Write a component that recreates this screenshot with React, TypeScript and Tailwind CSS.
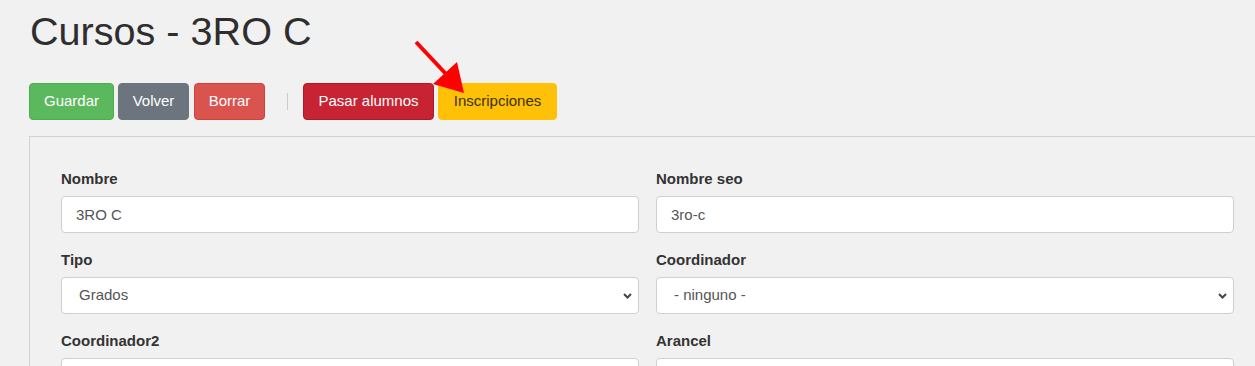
const Chevron = () => (
  <svg
    className="pointer-events-none absolute right-[7px] top-1/2 -translate-y-1/2"
    width="9"
    height="6"
    viewBox="0 0 9 6"
  >
    <path d="M1 1 L4.5 4.5 L8 1" fill="none" stroke="#444" strokeWidth="2" />
  </svg>
);

const Field = ({ label, value, select }: { label: string; value?: string; select?: boolean }) => (
  <div className="mb-[16px]">
    <label className="mb-[6px] block h-[22px] text-[15px] font-bold leading-[22px] text-[#333]">{label}</label>
    {select ? (
      <div className="relative">
        <select
          defaultValue={value}
          className="h-[37px] w-full appearance-none rounded-[4px] border border-[#cfcfcf] bg-white pl-[17px] text-[15px] text-[#555] outline-none"
        >
          <option>{value}</option>
        </select>
        <Chevron />
      </div>
    ) : (
      <input
        readOnly
        value={value ?? ""}
        className="block h-[37px] w-full rounded-[4px] border border-[#cfcfcf] bg-white pl-[14px] text-[15px] text-[#555] outline-none"
      />
    )}
  </div>
);

export default function App() {
  return (
    <div className="relative h-[366px] w-[1255px] overflow-hidden bg-[#f1f1f1] pl-[29px] font-['Liberation_Sans',Arial,sans-serif]">
      <h1 className="ml-[1px] pt-[9px] text-[39.6px] font-normal leading-[44px] text-[#2e2e2e]">Cursos - 3RO C</h1>

      <div className="mt-[30px] flex h-[37px] items-center text-[15px]">
        <button className="h-[37px] w-[85px] rounded-[4px] border border-[#4cae4c] bg-[#5cb85c] text-white">Guardar</button>
        <button className="ml-[4px] h-[37px] w-[71px] rounded-[4px] border border-[#6c757d] bg-[#6c757d] text-white">Volver</button>
        <button className="ml-[5px] h-[37px] w-[71px] rounded-[4px] border border-[#d43f3a] bg-[#d9534f] text-white">Borrar</button>
        <div className="ml-[22px] h-[17px] w-px bg-[#cccccc]" />
        <button className="ml-[15px] h-[37px] w-[131px] rounded-[4px] border border-[#a71d2a] bg-[#c82333] text-white">Pasar alumnos</button>
        <button className="ml-[4px] h-[37px] w-[119px] rounded-[4px] border border-[#ffc107] bg-[#ffc107] text-[#3a3200]">Inscripciones</button>
      </div>

      <div className="mt-[16px] w-[1240px] border border-[#d2d2d2] px-[31px] pt-[31px]">
        <div className="grid grid-cols-[578px_578px] gap-x-[17px]">
          <Field label="Nombre" value="3RO C" />
          <Field label="Nombre seo" value="3ro-c" />
          <Field label="Tipo" value="Grados" select />
          <Field label="Coordinador" value="- ninguno -" select />
          <Field label="Coordinador2" value="" />
          <Field label="Arancel" value="" />
        </div>
      </div>

      <svg className="pointer-events-none absolute left-0 top-0" width="1255" height="366">
        <line x1="416" y1="42" x2="446" y2="74" stroke="#ff0000" strokeWidth="4" />
        <polygon points="433,84 457,62 464,93" fill="#ff0000" />
      </svg>
    </div>
  );
}
